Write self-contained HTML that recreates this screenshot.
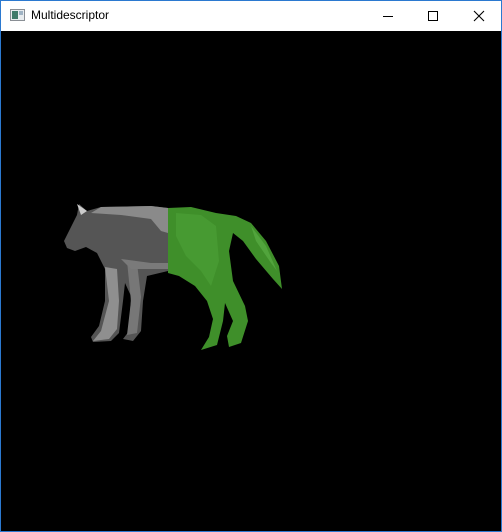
<!DOCTYPE html>
<html><head><style>
html,body{margin:0;padding:0;width:502px;height:532px;overflow:hidden;background:#fff}
.win{position:absolute;left:0;top:0;width:500px;height:530px;border:1px solid #2b79d0;background:#000}
.tb{position:absolute;left:0;top:0;width:500px;height:30px;background:#fff}
.t{position:absolute;left:30px;top:7px;font:12px "Liberation Sans",sans-serif;color:#000}
</style></head><body>
<div class="win">
<div class="tb">
<svg width="500" height="30" style="position:absolute;left:0;top:0">
<rect x="9.5" y="8.5" width="14" height="11" fill="#e8ecef" stroke="#8a8f95"/>
<rect x="11" y="10" width="6" height="8" fill="#3f7a6a"/>
<rect x="18" y="10" width="4" height="4" fill="#9fb3c4"/>
<line x1="382" y1="15.5" x2="392" y2="15.5" stroke="#000"/>
<rect x="427.5" y="10.5" width="9" height="9" fill="none" stroke="#000"/>
<path d="M473 10 L483 20 M483 10 L473 20" stroke="#000" stroke-width="1.1"/>
</svg>
<div class="t">Multidescriptor</div>
</div>
<svg width="500" height="530" style="position:absolute;left:0;top:0">
<path d="M167 207 L150 205 L100 206 L86 210 L78 203 L76 214 L70 226 L63 240 L66 247 L74 250 L85 246 L96 252 L104 268 L104 300 L98 325 L90 336 L92 341 L110 340 L118 332 L122 300 L124 282 L130 295 L128 330 L122 338 L132 340 L140 330 L142 300 L146 275 L167 270 Z" fill="#555"/>
<path d="M167 207 L150 205 L100 206 L90 212 L120 214 L150 218 L160 230 L167 232 Z" fill="#8a8a8a"/>
<path d="M104 266 L108 300 L100 330 L92 340 L108 338 L116 328 L118 300 L116 268 Z" fill="#8f8f8f"/>
<path d="M126 260 L130 300 L126 334 L136 332 L140 296 L136 262 Z" fill="#777"/>
<path d="M120 258 L150 262 L167 262 L167 268 L130 268 Z" fill="#7a7a7a"/>
<path d="M76 203 L80 214 L86 210 Z" fill="#ccc"/>
<path d="M167 207 L190 206 L215 212 L235 215 L250 222 L265 240 L278 265 L281 288 L272 278 L255 258 L242 240 L232 232 L228 250 L232 280 L244 305 L247 320 L240 342 L228 346 L226 335 L232 320 L224 302 L222 320 L216 344 L200 349 L208 336 L212 318 L206 300 L194 285 L178 275 L167 272 Z" fill="#3f8f2a"/>
<path d="M175 212 L200 214 L215 225 L218 260 L210 285 L200 270 L185 255 L175 235 Z" fill="#4a9c35" opacity="0.8"/>
<path d="M250 225 L265 245 L276 270 L270 262 L255 240 Z" fill="#5aad45" opacity="0.7"/>
</svg>
</div>
</body></html>
